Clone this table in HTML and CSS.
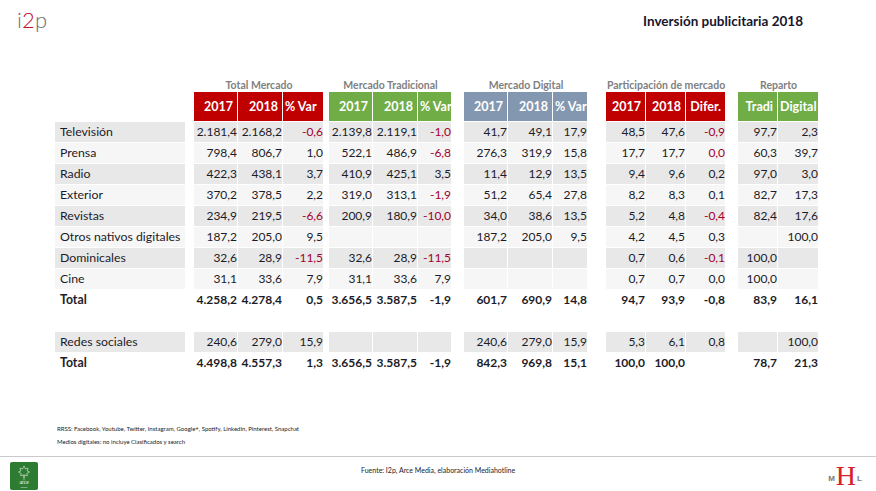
FILE: index.html
```html
<!DOCTYPE html>
<html lang="es">
<head>
<meta charset="utf-8">
<title>Inversión publicitaria 2018</title>
<link rel="stylesheet" href="styles.css">
</head>
<body>
<div class="page">
  <header class="top">
    <div class="logo">i<span class="red">2</span>p</div>
    <h1 class="title">Inversión publicitaria 2018</h1>
  </header>

  <table class="data">
    <colgroup>
      <col class="c-label"><col class="c-sp8">
      <col class="c44"><col class="c45"><col class="c41"><col class="c-sp5">
      <col class="c44"><col class="c45"><col class="c34"><col class="c-sp12">
      <col class="c44"><col class="c45"><col class="c35"><col class="c-sp18">
      <col class="c40"><col class="c40"><col class="c40"><col class="c-sp12">
      <col class="c40"><col class="c41">
    </colgroup>
    <thead>
      <tr class="groups">
        <th></th><th></th>
        <th colspan="3">Total Mercado</th><th></th>
        <th colspan="3">Mercado Tradicional</th><th></th>
        <th colspan="3">Mercado Digital</th><th></th>
        <th colspan="3">Participación de mercado</th><th></th>
        <th colspan="2">Reparto</th>
      </tr>
      <tr class="heads">
        <th></th><th></th>
        <th class="red">2017</th><th class="red">2018</th><th class="red lft">% Var</th><th></th>
        <th class="green">2017</th><th class="green">2018</th><th class="green lft">% Var</th><th></th>
        <th class="blue">2017</th><th class="blue">2018</th><th class="blue lft">% Var</th><th></th>
        <th class="red">2017</th><th class="red">2018</th><th class="red">Difer.</th><th></th>
        <th class="green">Tradi</th><th class="green lft">Digital</th>
      </tr>
    </thead>
    <tbody>
      <tr class="dk">
        <td class="lbl">Televisión</td><td class="sp"></td>
        <td>2.181,4</td><td>2.168,2</td><td class="neg">-0,6</td><td class="sp"></td>
        <td>2.139,8</td><td>2.119,1</td><td class="neg">-1,0</td><td class="sp"></td>
        <td>41,7</td><td>49,1</td><td>17,9</td><td class="sp"></td>
        <td>48,5</td><td>47,6</td><td class="neg">-0,9</td><td class="sp"></td>
        <td>97,7</td><td>2,3</td>
      </tr>
      <tr class="lt">
        <td class="lbl">Prensa</td><td class="sp"></td>
        <td>798,4</td><td>806,7</td><td>1,0</td><td class="sp"></td>
        <td>522,1</td><td>486,9</td><td class="neg">-6,8</td><td class="sp"></td>
        <td>276,3</td><td>319,9</td><td>15,8</td><td class="sp"></td>
        <td>17,7</td><td>17,7</td><td class="neg">0,0</td><td class="sp"></td>
        <td>60,3</td><td>39,7</td>
      </tr>
      <tr class="dk">
        <td class="lbl">Radio</td><td class="sp"></td>
        <td>422,3</td><td>438,1</td><td>3,7</td><td class="sp"></td>
        <td>410,9</td><td>425,1</td><td>3,5</td><td class="sp"></td>
        <td>11,4</td><td>12,9</td><td>13,5</td><td class="sp"></td>
        <td>9,4</td><td>9,6</td><td>0,2</td><td class="sp"></td>
        <td>97,0</td><td>3,0</td>
      </tr>
      <tr class="lt">
        <td class="lbl">Exterior</td><td class="sp"></td>
        <td>370,2</td><td>378,5</td><td>2,2</td><td class="sp"></td>
        <td>319,0</td><td>313,1</td><td class="neg">-1,9</td><td class="sp"></td>
        <td>51,2</td><td>65,4</td><td>27,8</td><td class="sp"></td>
        <td>8,2</td><td>8,3</td><td>0,1</td><td class="sp"></td>
        <td>82,7</td><td>17,3</td>
      </tr>
      <tr class="dk">
        <td class="lbl">Revistas</td><td class="sp"></td>
        <td>234,9</td><td>219,5</td><td class="neg">-6,6</td><td class="sp"></td>
        <td>200,9</td><td>180,9</td><td class="neg">-10,0</td><td class="sp"></td>
        <td>34,0</td><td>38,6</td><td>13,5</td><td class="sp"></td>
        <td>5,2</td><td>4,8</td><td class="neg">-0,4</td><td class="sp"></td>
        <td>82,4</td><td>17,6</td>
      </tr>
      <tr class="lt">
        <td class="lbl">Otros nativos digitales</td><td class="sp"></td>
        <td>187,2</td><td>205,0</td><td>9,5</td><td class="sp"></td>
        <td></td><td></td><td></td><td class="sp"></td>
        <td>187,2</td><td>205,0</td><td>9,5</td><td class="sp"></td>
        <td>4,2</td><td>4,5</td><td>0,3</td><td class="sp"></td>
        <td></td><td>100,0</td>
      </tr>
      <tr class="dk">
        <td class="lbl">Dominicales</td><td class="sp"></td>
        <td>32,6</td><td>28,9</td><td class="neg">-11,5</td><td class="sp"></td>
        <td>32,6</td><td>28,9</td><td class="neg">-11,5</td><td class="sp"></td>
        <td></td><td></td><td></td><td class="sp"></td>
        <td>0,7</td><td>0,6</td><td class="neg">-0,1</td><td class="sp"></td>
        <td>100,0</td><td></td>
      </tr>
      <tr class="lt">
        <td class="lbl">Cine</td><td class="sp"></td>
        <td>31,1</td><td>33,6</td><td>7,9</td><td class="sp"></td>
        <td>31,1</td><td>33,6</td><td>7,9</td><td class="sp"></td>
        <td></td><td></td><td></td><td class="sp"></td>
        <td>0,7</td><td>0,7</td><td>0,0</td><td class="sp"></td>
        <td>100,0</td><td></td>
      </tr>
      <tr class="tot">
        <td class="lbl">Total</td><td></td>
        <td>4.258,2</td><td>4.278,4</td><td>0,5</td><td></td>
        <td>3.656,5</td><td>3.587,5</td><td>-1,9</td><td></td>
        <td>601,7</td><td>690,9</td><td>14,8</td><td></td>
        <td>94,7</td><td>93,9</td><td>-0,8</td><td></td>
        <td>83,9</td><td>16,1</td>
      </tr>
      <tr class="blank"><td colspan="20"></td></tr>
      <tr class="dk">
        <td class="lbl">Redes sociales</td><td class="sp"></td>
        <td>240,6</td><td>279,0</td><td>15,9</td><td class="sp"></td>
        <td></td><td></td><td></td><td class="sp"></td>
        <td>240,6</td><td>279,0</td><td>15,9</td><td class="sp"></td>
        <td>5,3</td><td>6,1</td><td>0,8</td><td class="sp"></td>
        <td></td><td>100,0</td>
      </tr>
      <tr class="tot">
        <td class="lbl">Total</td><td></td>
        <td>4.498,8</td><td>4.557,3</td><td>1,3</td><td></td>
        <td>3.656,5</td><td>3.587,5</td><td>-1,9</td><td></td>
        <td>842,3</td><td>969,8</td><td>15,1</td><td></td>
        <td>100,0</td><td>100,0</td><td></td><td></td>
        <td>78,7</td><td>21,3</td>
      </tr>
    </tbody>
  </table>

  <div class="notes">
    <p>RRSS: Facebook, Youtube, Twitter, Instagram, Google+, Spotify, LinkedIn, Pinterest, Snapchat</p>
    <p>Medios digitales: no incluye Clasificados y search</p>
  </div>

  <footer class="foot">
    <div class="arce">
      <svg width="28" height="28" viewBox="0 0 28 28" aria-label="arce media">
        <rect x="0" y="0" width="28" height="28" rx="2" fill="#2e7b32"/>
        <path d="M14 4 L15.5 7 L18 6.2 L17.2 9 L19.5 10 L16.8 11.6 L17.4 13.8 L14.6 12.8 L14 16 L13.4 12.8 L10.6 13.8 L11.2 11.6 L8.5 10 L10.8 9 L10 6.2 L12.5 7 Z" fill="none" stroke="#e6efe4" stroke-width="0.6"/>
        <path d="M14 16 L14 18.5" stroke="#e6efe4" stroke-width="0.6"/>
        <text x="14" y="22.3" text-anchor="middle" class="arce-t">arce</text>
        <text x="14" y="25.6" text-anchor="middle" class="arce-s">media</text>
      </svg>
    </div>
    <div class="fuente">Fuente: I2p, Arce Media, elaboración Mediahotline</div>
    <div class="mhl"><span class="ml">M</span><span class="h">H</span><span class="ml">L</span></div>
  </footer>
</div>
</body>
</html>
```

FILE: styles.css
```css
* { box-sizing: border-box; }
html, body { margin: 0; padding: 0; background: #fff; }
body { font-family: Lato, "Open Sans", sans-serif; color: #1c1c28; }
.page { width: 876px; height: 491px; overflow: hidden; display: flex; flex-direction: column; }

.top { height: 79px; display: flex; justify-content: space-between; align-items: flex-start; }
.logo { margin: 7px 0 0 17px; font-family: Lato, sans-serif; font-weight: 300; font-size: 22px; color: #6e6e6e; line-height: 26px; letter-spacing: 0.2px; }
.logo .red { color: #c8102e; }
.title { margin: 12px 73px 0 0; font-size: 13.5px; font-weight: 700; color: #16162e; line-height: 18px; }

.data { margin-left: 55px; border-collapse: separate; border-spacing: 0; table-layout: fixed; width: 764px; font-size: 12px; }
.c-label { width: 131px; } .c-sp8 { width: 8px; } .c-sp5 { width: 5px; } .c-sp12 { width: 12px; } .c-sp18 { width: 18px; }
.c44 { width: 44px; } .c45 { width: 45px; } .c41 { width: 41px; } .c40 { width: 40px; } .c34 { width: 34px; } .c35 { width: 35px; }

.data th, .data td { padding: 0; white-space: nowrap; overflow: hidden; }
.groups th { height: 13px; font-size: 10.5px; font-weight: 700; color: #7f7f7f; text-align: center; line-height: 13px; vertical-align: bottom; padding-bottom: 0; overflow: visible; }
.heads th { height: 30px; border-right: 1px solid #fff; border-bottom: 1px solid #fff; font-weight: 700; color: #fff; text-align: right; padding-right: 4px; font-size: 12.5px; }
.heads th.lft { text-align: left; padding: 0 0 0 2px; text-overflow: clip; }
.heads .red { background: #c00000; }
.heads .green { background: #70ad47; }
.heads .blue { background: #8497b0; }

tbody td { height: 21px; border-right: 1px solid #fff; border-bottom: 1px solid #fff; text-align: right; padding: 2px 1px 0 0; line-height: 18px; }
tbody td.lbl { text-align: left; padding-left: 5px; font-size: 12.3px; }
tbody td.sp { background: none; }
tr.dk td { background: #e8e8e8; }
tr.lt td { background: #f6f6f6; }
tr.dk td.sp, tr.lt td.sp { background: none; }
td.neg { color: #a2002c; }
tr.tot td { font-weight: 700; background: none; }
tr.tot td.lbl { line-height: 18px; vertical-align: top; padding-top: 1px; }
tr.blank td { height: 21px; border: 0; padding: 0; }

.notes { margin: 48px 0 0 57px; font-size: 6px; line-height: 13px; color: #222; }
.notes p { margin: 0; }

.foot { margin-top: 8px; border-top: 1px solid #cacaca; flex: 1; display: flex; justify-content: space-between; align-items: flex-start; padding: 5px 14px 0 10px; }
.arce svg { display: block; }
.arce-t { font-family: "Liberation Serif", serif; font-size: 5.5px; fill: #fff; }
.arce-s { font-family: Lato, sans-serif; font-size: 2.5px; fill: #dfe9dc; }
.fuente { font-size: 7px; color: #1c1c28; margin-top: 4px; margin-left: 10px; }
.mhl { display: flex; align-items: center; margin-top: 2px; height: 24px; }
.mhl .ml { font-family: "Liberation Sans", sans-serif; font-weight: 700; font-size: 8px; color: #7a7a7a; margin-top: 4px; }
.mhl .h { font-family: "Liberation Serif", serif; font-size: 28px; line-height: 24px; color: #d6212b; margin: 0 1px; }
```
